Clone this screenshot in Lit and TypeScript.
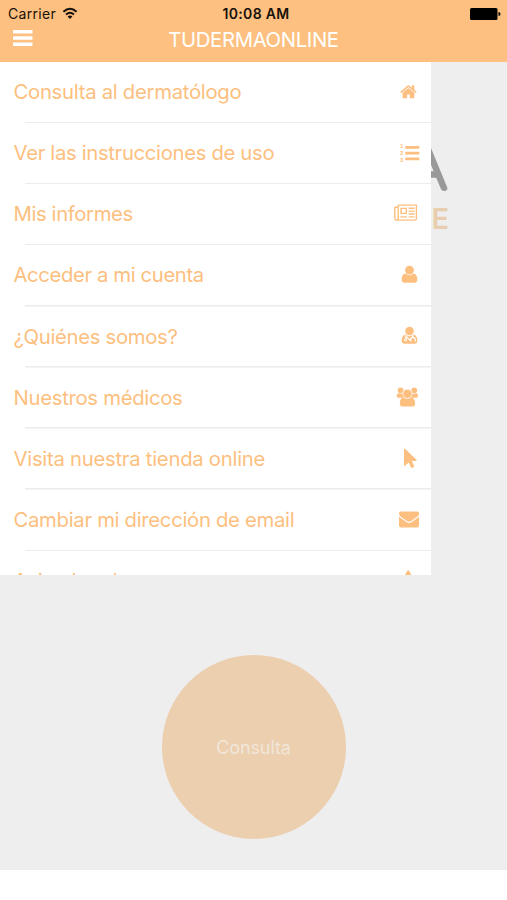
import { LitElement, html, svg, css } from "lit";
import { customElement } from "lit/decorators.js";

const icons: Record<string, unknown> = {
  home: svg`<g transform="translate(6.3 1.7) scale(.0102)"><path d="M1472 992v480q0 26-19 45t-45 19h-384v-384h-256v384h-384q-26 0-45-19t-19-45v-480q0-1 .5-3t.5-3l575-474 575 474q1 2 1 6zm223-69l-62 74q-8 9-21 11h-3q-13 0-21-7l-692-577-692 577q-12 8-24 7-13-2-21-11l-62-74q-8-10-7-23.5t11-21.5l719-599q32-26 76-26t76 26l244 204v-195q0-14 9-23t23-9h192q14 0 23 9t9 23v408l219 182q10 8 11 21.5t-7 23.5z"/></g>`,
  list: svg`<rect x="12.3" y="4" width="14" height="2.8" rx=".5"/><rect x="12.3" y="9.7" width="14" height="2.8" rx=".5"/><rect x="12.3" y="15.4" width="14" height="2.8" rx=".5"/><text x="6.9" y="6.1">1</text><text x="6.9" y="13.2">2</text><text x="6.9" y="20.3">3</text>`,
  news: svg`<path fill="none" stroke="currentColor" stroke-width="1.4" stroke-linejoin="round" d="M5.2 2.1H23.4V15.6Q23.4 17.1 21.9 17.1H3.4Q1.8 17.1 1.8 15.4V4.2H5.2M5.2 2.1V15.2Q5.2 17 3.5 17"/><path fill="none" stroke="currentColor" stroke-width="1.4" d="M8 5.4h5.3v5H8zM7.3 13.9h6.7M15.6 5.2h6M15.6 8.1h6M15.6 11h6M15.6 13.9h6"/>`,
  user: svg`<circle cx="16.5" cy="6.2" r="4.4"/><path d="M12.3 9.4q4.2 3.5 8.4 0 3.6.8 3.6 6.1 0 3.3-2.8 3.3h-10q-2.8 0-2.8-3.3 0-5.3 3.6-6.1z"/>`,
  doctor: svg`<circle cx="16.5" cy="6" r="4.3"/><path d="M12.3 9.4q4.2 3.5 8.4 0 3.6.8 3.6 6.1 0 3.2-2.8 3.2h-10q-2.8 0-2.8-3.2 0-5.3 3.6-6.1z"/><path fill="none" stroke="#fff" stroke-width="1.1" d="M12.8 10.3v3.2M20 10.2v2.2M17.8 16.6v-2q0-2.2 2.2-2.2t2.2 2.2v2M13.2 11.5l3.3 3.4 3.1-3.2"/><circle cx="12.5" cy="14.8" r="1.5" fill="#fff"/><circle cx="12.5" cy="14.8" r=".6"/>`,
  users: svg`<circle cx="7.6" cy="3.3" r="2.9"/><circle cx="21.2" cy="3.3" r="2.9"/><path d="M5.5 5.9q2.5 1.7 4.6.3.1 2.8 1.4 4.6H6.1Q3.7 10.8 3.7 9.2q0-2.8 1.8-3.3zM23.3 5.9q-2.5 1.7-4.6.3-.1 2.8-1.4 4.6h5.4q2.4 0 2.4-1.6 0-2.8-1.8-3.3z"/><circle cx="14.4" cy="6.8" r="4.6" stroke="#fff" stroke-width=".6"/><path d="M10.5 10.3q3.9 3.2 7.8 0 3.8.7 3.8 6.1 0 3.1-2.7 3.1H9.5q-2.7 0-2.7-3.1 0-5.4 3.7-6.1z"/>`,
  cursor: svg`<path d="M11 1.2Q11 .1 12 .8L23.4 11.8Q24.2 12.9 23 13.1H18.9L21.2 18.2Q21.3 18.8 20.8 19.1L18.8 19.9Q18.2 20 18 19.4L15.7 14.4 12.3 17.4Q11 18.3 11 17z"/>`,
  mail: svg`<path d="M6 4.3Q6 2.5 7.8 2.5H24.3Q26.1 2.5 26.1 4.3 26.1 6.2 24.5 7.4L18.2 12Q16 13.5 13.8 12L7.5 7.4Q6 6.1 6 4.3zM6 7.8L13.3 13.1Q16 15 18.8 13.1L26.1 7.8V16.6Q26.1 18.4 24.3 18.4H7.8Q6 18.4 6 16.6z"/>`,
  warning: svg`<path d="M14.2 1.1q1-1.5 2 0l8.1 15q.8 2-1.2 2H7.3q-2 0-1.2-2z"/>`,
};

@customElement("menu-row")
class MenuRow extends LitElement {
  static properties = { label: {}, icon: {}, track: { type: Number } };
  declare label: string;
  declare icon: string;
  declare track: number;
  static styles = css`
    :host { display: block; flex: none; height: 61.15px; color: #fdbf80; }
    .row { display: flex; box-sizing: border-box; height: 100%; padding: 0 10px 0 13.5px; justify-content: space-between; align-items: flex-start;
      background: linear-gradient(#ececec, #ececec) 25px 100% / 100% 1.6px no-repeat; }
    .label { font-size: 20.3px; line-height: 60px; white-space: nowrap; }
    svg { width: 28px; height: 24px; margin-top: 18.9px; fill: currentColor; overflow: visible; }
    text { font: 700 6px "Liberation Sans", sans-serif; }
  `;
  render() {
    return html`<div class="row"><span class="label" style="letter-spacing:${this.track}px">${this.label}</span><svg viewBox="0 0 28 24">${icons[this.icon]}</svg></div>`;
  }
}

const entries: [string, string, number][] = [
  ["Consulta al dermatólogo", "home", -0.28],
  ["Ver las instrucciones de uso", "list", -0.33],
  ["Mis informes", "news", -0.38],
  ["Acceder a mi cuenta", "user", -0.38],
  ["¿Quiénes somos?", "doctor", -0.31],
  ["Nuestros médicos", "users", -0.29],
  ["Visita nuestra tienda online", "cursor", -0.26],
  ["Cambiar mi dirección de email", "mail", -0.3],
  ["Aviso legal", "warning", 0.1],
];

@customElement("app-root")
class AppRoot extends LitElement {
  static styles = css`
    :host { display: flex; flex-direction: column; position: relative; width: 507px; height: 900px; overflow: hidden; background: #fff; font-family: Inter, "Liberation Sans", sans-serif; }
    header { flex: none; height: 62px; background: #fdc080; }
    .status { display: grid; grid-template-columns: 1fr auto 1fr; height: 27px; padding: 0 6px 0 8px; align-items: center; color: #17110b; font-size: 14px; line-height: 27px; }
    .carrier { display: flex; align-items: center; gap: 5.5px; letter-spacing: .3px; }
    .wifi { width: 17px; height: 13px; margin-top: -1px; }
    .time { margin-left: 3px; font-weight: 600; font-size: 14px; letter-spacing: .35px; }
    .battery { justify-self: end; width: 31px; height: 12px; }
    .nav { display: grid; grid-template-columns: 1fr auto 1fr; padding: 0 13px; height: 24px; align-items: center; }
    .burger { width: 20px; height: 18px; fill: #fff; margin-top: -3px; }
    h1 { margin: 1px 0 -1px; color: #fff; font-weight: 400; font-size: 20.3px; line-height: 24px; letter-spacing: -.35px; }
    main { display: flex; flex: none; flex-direction: column; align-items: center; height: 808px; background: #eee; }
    .logo { display: flex; flex-direction: column; align-items: flex-end; align-self: stretch; box-sizing: border-box; height: 593px; padding: 78px 58px 0 0; }
    .brand { flex: none; width: 340px; height: 61px; font-family: Lato, sans-serif; font-size: 55px; font-weight: 100; fill: #999; stroke: #999; stroke-width: 5.8px; stroke-linejoin: round; }
    .sub { color: #e8ceaf; font-size: 29px; font-weight: 600; line-height: 36px; }
    .round { flex: none; display: flex; width: 184px; height: 184px; align-items: center; justify-content: center; border-radius: 50%; background: #ebcfaf; color: #f2e6d9; font-size: 18px; letter-spacing: -.1px; }
    nav { position: absolute; top: 62px; left: 0; display: flex; flex-direction: column; width: 431px; height: 513px; overflow: hidden; background: #fff; }
  `;
  render() {
    return html`
      <header>
        <div class="status">
          <span class="carrier">Carrier
            <svg class="wifi" viewBox="0 0 17 13" fill="none" stroke="#17110b" stroke-width="1.9"><path d="M1.4 4.8Q8-1.4 14.6 4.8M4 7.5Q8 3.9 12 7.5"/><path d="M8 12L5.6 9.5Q8 7.6 10.4 9.5z" fill="#17110b" stroke="none"/></svg>
          </span>
          <span class="time">10:08 AM</span>
          <svg class="battery" viewBox="0 0 31 12"><rect width="27.5" height="12" rx="1.5"/><path d="M28.5 4q2 .2 2 2t-2 2z"/></svg>
        </div>
        <div class="nav">
          <svg class="burger" viewBox="0 0 20 18"><rect y="1" width="19.5" height="3.6" rx=".6"/><rect y="7.2" width="19.5" height="3.6" rx=".6"/><rect y="13.4" width="19.5" height="3.6" rx=".6"/></svg>
          <h1>TUDERMAONLINE</h1>
        </div>
      </header>
      <main>
        <div class="logo"><svg class="brand" viewBox="0 0 340 61"><text x="336.5" y="48" text-anchor="end">TUDERMA</text></svg><span class="sub">ONLINE</span></div>
        <div class="round">Consulta</div>
      </main>
      <nav>${entries.map(([label, icon, track]) => html`<menu-row .label=${label} .icon=${icon} .track=${track}></menu-row>`)}</nav>
    `;
  }
}
